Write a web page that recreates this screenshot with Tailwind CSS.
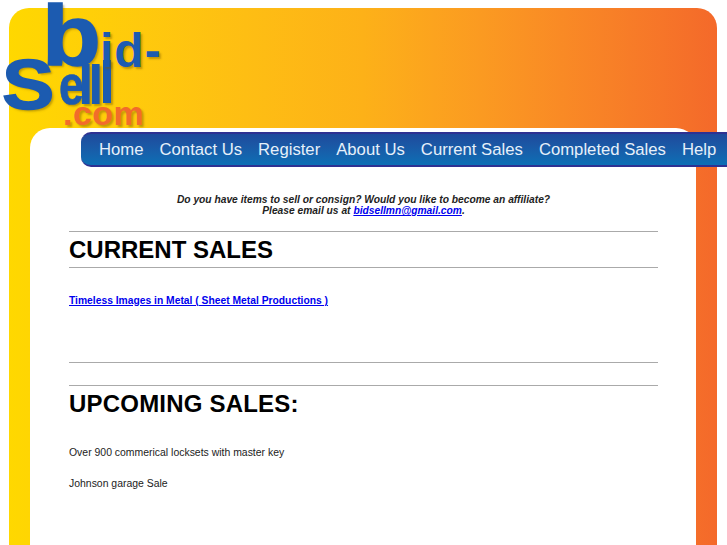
<!DOCTYPE html>
<html lang="en">
<head>
    <meta charset="UTF-8">
    <meta name="viewport" content="width=device-width, initial-scale=1.0">
    <title>Bid-Sell.com</title>
    <script src="https://cdn.jsdelivr.net/npm/@tailwindcss/browser@4"></script>
</head>
<body class="bg-white h-[545px] overflow-hidden font-['Liberation_Sans',Arial,sans-serif]">
    <div class="relative h-full pt-[8px] pl-[9px] pr-[10px]">
        <!-- logo sits over the frame -->
        <div class="absolute left-0 top-0 w-[170px] h-[135px] z-10 font-bold text-[#1c5bb0] [text-shadow:2px_2px_2px_rgba(120,90,0,0.45)]">
            <div class="absolute left-[103px] top-[60px] w-[8px] h-[43px] bg-[#1c5bb0] shadow-[2px_2px_2px_rgba(120,90,0,0.45)]"></div>
            <span class="absolute left-[42px] top-[-8px] text-[86px] leading-none origin-left scale-x-[1.12] [-webkit-text-stroke:1.5px_#1c5bb0]">b</span>
            <span class="absolute left-[100px] top-[27px] text-[48px] leading-none tracking-[1px]">id-</span>
            <span class="absolute left-[2px] top-[50px] text-[70px] leading-none origin-left scale-x-[1.12] [-webkit-text-stroke:1.5px_#1c5bb0]">S</span>
            <span class="absolute left-[59px] top-[57px] text-[56px] leading-none origin-left scale-x-[0.8] [-webkit-text-stroke:0.7px_#1c5bb0]">e</span>
            <span class="absolute left-[78px] top-[57px] text-[56px] leading-none tracking-[-5.6px]">ll</span>
            <span class="absolute left-[63px] top-[96px] text-[34px] leading-none tracking-[0.5px] text-[#f26c2a]">.com</span>
        </div>

        <div class="h-full rounded-t-[20px] bg-linear-to-r from-[#ffd800] via-[#fdb118] to-[#f4692a] pt-[120px] px-[21px]">
            <div class="h-full bg-white rounded-t-[20px] pt-[4px]">
                <nav class="h-[35px] ml-[51px] mr-[-31px] pl-[18px] flex items-center gap-[16px] rounded-l-[10px] border-y-2 border-[#2e3192] bg-linear-to-b from-[#1e4a9c] to-[#0b6fb5] text-[16.7px] text-[#e6f0fa] whitespace-nowrap">
                    <a href="#">Home</a>
                    <a href="#">Contact Us</a>
                    <a href="#">Register</a>
                    <a href="#">About Us</a>
                    <a href="#">Current Sales</a>
                    <a href="#">Completed Sales</a>
                    <a href="#">Help</a>
                </nav>

                <main class="ml-[39px] w-[589px] pt-[27px]">
                    <p class="text-center text-[10.25px] leading-[11px] font-bold italic text-[#222]">
                        Do you have items to sell or consign? Would you like to become an affiliate?<br>
                        Please email us at <a href="#" class="text-[#0000ee] underline">bidsellmn@gmail.com</a>.
                    </p>
                    <div class="mt-[15px] h-px bg-[#aaaaaa]"></div>
                    <h2 class="mt-[4px] text-[24px] leading-[28px] font-bold text-black">CURRENT SALES</h2>
                    <div class="mt-[3px] h-px bg-[#aaaaaa]"></div>
                    <p class="mt-[26px] text-[10.3px] leading-[13px] font-bold">
                        <a href="#" class="text-[#0000ee] underline">Timeless Images in Metal ( Sheet Metal Productions )</a>
                    </p>
                    <div class="mt-[55px] h-px bg-[#aaaaaa]"></div>
                    <div class="mt-[22px] h-px bg-[#aaaaaa]"></div>
                    <h2 class="mt-[4px] text-[24px] leading-[28px] font-bold tracking-[0.2px] text-black">UPCOMING SALES:</h2>
                    <p class="mt-[28px] text-[10.45px] leading-[13px] text-[#222]">Over 900 commerical locksets with master key</p>
                    <p class="mt-[18px] text-[10.45px] leading-[13px] text-[#222]">Johnson garage Sale</p>
                </main>
            </div>
        </div>
    </div>
</body>
</html>
